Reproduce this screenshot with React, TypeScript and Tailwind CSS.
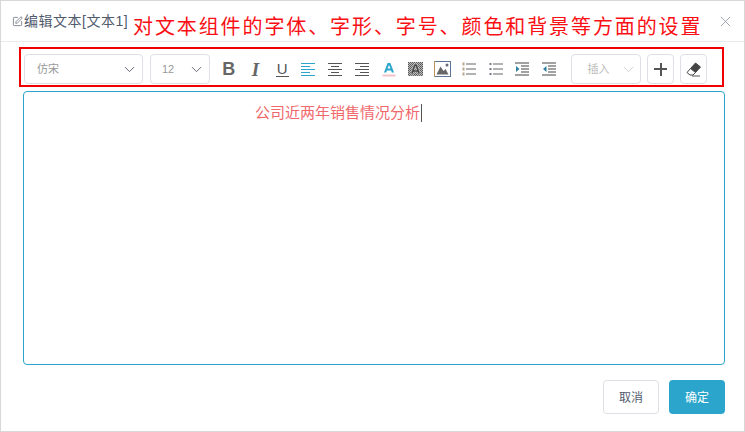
import { ChevronDown, SquarePen, X } from "lucide-react";
import type { ReactNode } from "react";

const cjk = "font-['Liberation_Sans','Noto_Sans_CJK_SC',sans-serif]";

function Lines({ rows, color = "#555" }: { rows: [number, number][]; color?: string }) {
  return (
    <svg width="15" height="15" viewBox="0 0 15 15">
      {rows.map(([x1, x2], i) => (
        <rect key={i} x={x1} y={1 + i * 3} width={x2 - x1} height="1" fill={color} />
      ))}
    </svg>
  );
}

const alignLeft: [number, number][] = [[0, 14], [0, 9], [0, 14], [0, 9], [0, 14]];
const alignCenter: [number, number][] = [[0, 14], [3, 11], [0, 14], [3, 11], [0, 14]];
const alignRight: [number, number][] = [[0, 14], [5, 14], [0, 14], [5, 14], [0, 14]];

function ListIcon({ numbered }: { numbered?: boolean }) {
  return (
    <svg width="14" height="14" viewBox="0 0 14 14">
      {[2, 7, 12].map((y) => (
        <g key={y}>
          {numbered ? (
            <rect x="0.500" y={y - 1.500} width="2" height="3" fill="#b9a68c" />
          ) : (
            <rect x="0.500" y={y - 1} width="2" height="2" fill="#778" />
          )}
          <rect x="4" y={y - 0.500} width="10" height="1" fill="#666" />
        </g>
      ))}
    </svg>
  );
}

function IndentIcon({ out }: { out?: boolean }) {
  return (
    <svg width="14" height="14" viewBox="0 0 14 14">
      {[1, 4, 7, 10, 13].map((y, i) => (
        <rect key={y} x={i === 0 || i === 4 ? 0 : 6} y={y - 0.500} width={i === 0 || i === 4 ? 14 : 8} height="1" fill="#444" />
      ))}
      <path d={out ? "M4.500 4 L1 7 L4.500 10 Z" : "M1 4 L4.500 7 L1 10 Z"} fill="#2f7f9f" />
    </svg>
  );
}

function FontColorIcon() {
  return (
    <svg width="14" height="15" viewBox="0 0 14 15">
      <path d="M5.600 1h2.800L12 10.500H9.800L9.100 8.400H4.900L4.200 10.500H2zM5.500 6.600h3L7 2.900z" fill="#2ba5cc" fillRule="evenodd" />
      <rect x="0.500" y="12.500" width="13" height="2" fill="#f4c2c8" />
    </svg>
  );
}

function BackColorIcon() {
  return (
    <svg width="15" height="14" viewBox="0 0 15 14">
      <defs>
        <pattern id="dots" width="2" height="2" patternUnits="userSpaceOnUse">
          <rect width="2" height="2" fill="#bbb" />
          <rect width="1" height="1" fill="#555" />
          <rect x="1" y="1" width="1" height="1" fill="#666" />
        </pattern>
      </defs>
      <rect width="15" height="14" fill="url(#dots)" />
      <path d="M6 2h3l3.400 10h-2.400l-.6-2H5.600l-.6 2H2.600zM6.300 8h2.400L7.500 4.200z" fill="#444" fillRule="evenodd" stroke="#fff" strokeWidth="0.400" />
    </svg>
  );
}

function ImageIcon() {
  return (
    <svg width="17" height="16" viewBox="0 0 17 16">
      <rect x="0.500" y="0.500" width="16" height="15" fill="#fff" stroke="#5b7396" />
      <rect x="0" y="0" width="1" height="16" fill="#b9925c" />
      <path d="M2.500 13.500 L6.500 5.500 L9.500 10 L11.500 8 L14.500 13.500 Z" fill="#666" />
      <circle cx="13" cy="4" r="1.500" fill="#667" />
    </svg>
  );
}

function EraserIcon() {
  return (
    <svg width="16" height="15" viewBox="0 0 16 15">
      <path d="M9.500 1 L14.500 5 L9.500 10.500 L4.500 6.500 Z" fill="#444" stroke="#444" strokeLinejoin="round" />
      <path d="M4.500 6.500 L9.500 10.500 L7 13 L4 13 L1 10.500 Z" fill="#fff" stroke="#444" strokeLinejoin="round" />
      <rect x="6" y="13.500" width="8" height="1" fill="#555" />
    </svg>
  );
}

function ToolIcon({ children }: { children: ReactNode }) {
  return <div className="flex h-[30px] w-[26.7px] items-center justify-center">{children}</div>;
}

function SelectBox({ label, width, small }: { label: string; width: string; small?: boolean }) {
  return (
    <div className={`flex h-[30px] items-center justify-between rounded-[4px] border border-[#dfe0e6] bg-white ${width} ${small ? "pl-[11px] pr-[4px]" : "pl-[12px] pr-[4px]"}`}>
      <span className="text-[11px] text-[#999]">{label}</span>
      <ChevronDown size={17} strokeWidth={1.4} className="text-[#667]" />
    </div>
  );
}

export default function App() {
  return (
    <div className={`flex h-[432px] w-[745px] flex-col border border-[#d8d8d8] bg-white ${cjk}`}>
      <header className="flex h-[41px] shrink-0 items-center border-b border-[#e8eaec] pl-[11px] pr-[10px]">
        <SquarePen size={11} strokeWidth={1.5} className="mr-px text-[#555a6e]" />
        <span className="w-[109px] shrink-0 text-[14px] tracking-[0.5px] whitespace-nowrap text-[#515a6e]">编辑文本[文本1]</span>
        <span className="mt-[11px] text-[20px] leading-[24px] tracking-[1.9px] whitespace-nowrap text-[#fa0f14]">
          对文本组件的字体、字形、字号、颜色和背景等方面的设置
        </span>
        <X size={17} strokeWidth={1} className="ml-auto text-[#7d8796]" />
      </header>

      <div className="mx-[18px] mt-[5px] flex h-[40px] w-[705px] items-start border-2 border-[#f00000] pl-[3px] pt-[5px]">
        <SelectBox label="仿宋" width="w-[119px]" />
        <div className="w-[7px]" />
        <SelectBox label="12" width="w-[60px]" small />
        <div className="flex pl-[5.500px]">
          <ToolIcon><span className="text-[18px] leading-none font-bold text-[#666]">B</span></ToolIcon>
          <ToolIcon><span className="font-['Liberation_Serif',serif] text-[19px] leading-none font-bold text-[#666] italic">I</span></ToolIcon>
          <ToolIcon>
            <span className="border-b border-[#555] px-[1px] text-[15px] leading-[15px] text-[#555]">U</span>
          </ToolIcon>
          <ToolIcon><Lines rows={alignLeft} color="#2ba5cc" /></ToolIcon>
          <ToolIcon><Lines rows={alignCenter} /></ToolIcon>
          <ToolIcon><Lines rows={alignRight} /></ToolIcon>
          <ToolIcon><FontColorIcon /></ToolIcon>
          <ToolIcon><BackColorIcon /></ToolIcon>
          <ToolIcon><ImageIcon /></ToolIcon>
          <ToolIcon><ListIcon numbered /></ToolIcon>
          <ToolIcon><ListIcon /></ToolIcon>
          <ToolIcon><IndentIcon /></ToolIcon>
          <ToolIcon><IndentIcon out /></ToolIcon>
        </div>
        <div className="ml-[9px] flex h-[30px] w-[70px] items-center justify-between rounded-[4px] border border-[#dfe0e6] bg-white pl-[15px] pr-[3px]">
          <span className="text-[11px] text-[#bbb]">插入</span>
          <ChevronDown size={17} strokeWidth={1.2} className="text-[#ccc]" />
        </div>
        <div className="ml-[6px] flex h-[30px] w-[27px] items-center justify-center rounded-[4px] border border-[#dfe0e6]">
          <span className="relative block h-[13px] w-[13px]">
            <span className="absolute left-0 top-[5.500px] h-[2px] w-[13px] bg-[#555]" />
            <span className="absolute left-[5.500px] top-0 h-[13px] w-[2px] bg-[#555]" />
          </span>
        </div>
        <div className="ml-[6px] flex h-[30px] w-[27px] items-center justify-center rounded-[4px] border border-[#dfe0e6]">
          <EraserIcon />
        </div>
      </div>

      <div className="ml-[22px] mt-[4px] h-[274px] w-[702px] rounded-[4px] border border-[#2ba5cc] pl-[231px] pt-[11px]">
        <div className="flex items-center text-[15px] leading-[20px] text-[#f0686c]">
          公司近两年销售情况分析
          <span className="ml-[1px] h-[18px] w-px bg-[#555]" />
        </div>
      </div>

      <footer className="ml-[602px] mt-[15px] flex gap-[10px]">
        <button className="h-[34px] w-[56px] rounded-[4px] border border-[#dfe0e6] bg-white pt-px text-[12px] text-[#515a6e]">取消</button>
        <button className="h-[34px] w-[56px] rounded-[4px] bg-[#2ba5cc] pt-px text-[12px] text-white">确定</button>
      </footer>
    </div>
  );
}
